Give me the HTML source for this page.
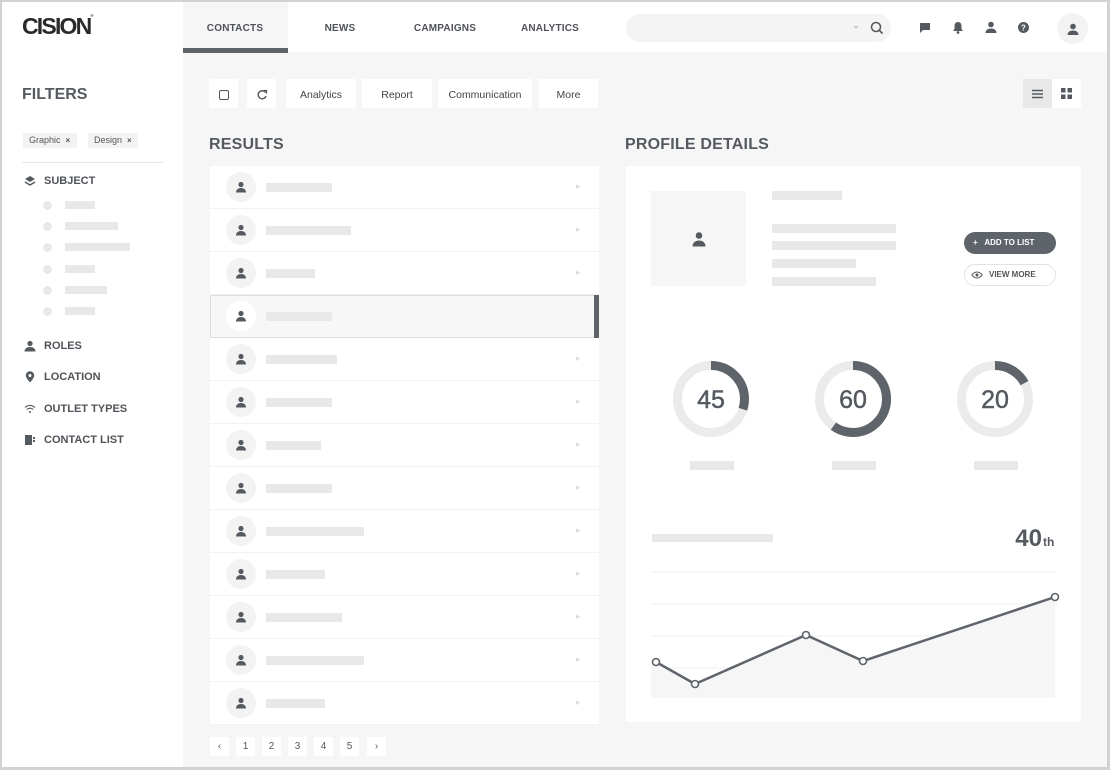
<!DOCTYPE html>
<html><head><meta charset="utf-8"><style>
*{margin:0;padding:0;box-sizing:border-box}
body{width:1110px;height:770px;position:relative;overflow:hidden;background:#fff;font-family:"Liberation Sans",Arial,sans-serif;color:#555a60}
.a{position:absolute}
.frame{left:0;top:0;width:1110px;height:770px;border:2px solid #d2d2d2;border-right-width:3px;border-bottom-width:3px;z-index:50;pointer-events:none}
.main{left:183px;top:52px;width:927px;height:718px;background:#f6f6f6}
.nav{top:23px;font-size:10px;font-weight:bold;color:#4f5359;letter-spacing:.2px;transform:translateX(-50%)}
.btn{top:79px;height:29px;background:#fff;font-size:10.5px;color:#555;display:flex;align-items:center;justify-content:center;font-weight:bold;padding-top:2px}
.h2{font-size:16px;font-weight:bold;color:#555a60;top:136px;letter-spacing:.2px}
.bar{background:#e8e8e8;height:9px}
.row{left:210px;width:389px;height:43px;background:#fff;border-bottom:1px solid #f2f2f2}
.av{width:30px;height:30px;border-radius:50%;background:#f3f3f3;display:flex;align-items:center;justify-content:center}
.chev{font-size:9px;color:#ddd}
.side{font-size:11px;font-weight:bold;color:#4f5359;left:44px}
.pg{top:737px;width:19px;height:19px;background:#fff;font-size:10px;color:#555;display:flex;align-items:center;justify-content:center}
</style></head><body>
<div class="a frame"></div>
<div class="a main"></div>
<!-- header -->
<div class="a" style="left:22px;top:13px;font-size:23px;font-weight:bold;color:#2a2a2a;letter-spacing:-1.8px">CISION<span style="font-size:4px;vertical-align:top;letter-spacing:0">®</span></div>
<div class="a" style="left:183px;top:0;width:105px;height:52px;background:#f6f6f6"></div>
<div class="a" style="left:183px;top:48px;width:105px;height:5px;background:#5f646b"></div>
<div class="a nav" style="left:235px">CONTACTS</div>
<div class="a nav" style="left:340px">NEWS</div>
<div class="a nav" style="left:445px">CAMPAIGNS</div>
<div class="a nav" style="left:550px">ANALYTICS</div>
<div class="a" style="left:626px;top:14px;width:265px;height:28px;border-radius:14px;background:#f4f4f4"></div>
<svg class="a" style="left:850px;top:20px" width="40" height="16"><path d="M3 6l3 3 3-3z" fill="#ccc"/><circle cx="26" cy="7" r="4.5" fill="none" stroke="#555" stroke-width="1.5"/><path d="M29.5 10.5l3 3" stroke="#555" stroke-width="1.6"/></svg>
<svg class="a" style="left:918px;top:21px" width="14" height="14"><path d="M2 2h10v7H5l-3 3z" fill="#555a60"/></svg>
<svg class="a" style="left:951px;top:20px" width="14" height="15"><path d="M7 2c-2.5 0-3.5 2-3.5 4v3L2 11h10l-1.5-2V6C10.5 4 9.5 2 7 2z" fill="#555a60"/><circle cx="7" cy="12.5" r="1.4" fill="#555a60"/></svg>
<svg class="a" style="left:984px;top:20px" width="14" height="14"><circle cx="7" cy="4.5" r="2.8" fill="#555a60"/><path d="M1.5 13c0-3 2.5-4.5 5.5-4.5s5.5 1.5 5.5 4.5z" fill="#555a60"/></svg>
<svg class="a" style="left:1017px;top:21px" width="13" height="13"><circle cx="6.5" cy="6.5" r="5.5" fill="#555a60"/><text x="6.5" y="9.5" font-size="8" font-weight="bold" fill="#fff" text-anchor="middle" font-family="Liberation Sans">?</text></svg>
<div class="a av" style="left:1057px;top:13px;width:31px;height:31px"><svg width="14" height="14"><circle cx="7" cy="4.5" r="2.8" fill="#555a60"/><path d="M1.5 13c0-3 2.5-4.5 5.5-4.5s5.5 1.5 5.5 4.5z" fill="#555a60"/></svg></div>

<!-- sidebar -->
<div class="a" style="left:22px;top:86px;font-size:16px;font-weight:bold;color:#555a60">FILTERS</div>
<div class="a" style="left:23px;top:133px;width:54px;height:15px;background:#f3f3f3;font-size:9px;color:#555;line-height:15px;padding-left:6px">Graphic&nbsp; <b style="font-size:8px">×</b></div>
<div class="a" style="left:88px;top:133px;width:50px;height:15px;background:#f3f3f3;font-size:9px;color:#555;line-height:15px;padding-left:6px">Design&nbsp; <b style="font-size:8px">×</b></div>
<div class="a" style="left:22px;top:162px;width:141px;height:1px;background:#e6e6e6"></div>
<svg class="a" style="left:24px;top:175px" width="12" height="12"><path d="M6 1l5 3-5 3-5-3z" fill="#555a60"/><path d="M1 7l5 3 5-3" fill="none" stroke="#555a60" stroke-width="1.5"/></svg>
<div class="a side" style="top:175px">SUBJECT</div>
<div class="a" style="left:43px;top:201px;width:9px;height:9px;border-radius:50%;background:#e8e8e8"></div><div class="a bar" style="left:65px;top:201px;width:30px;height:8px"></div>
<div class="a" style="left:43px;top:222px;width:9px;height:9px;border-radius:50%;background:#e8e8e8"></div><div class="a bar" style="left:65px;top:222px;width:53px;height:8px"></div>
<div class="a" style="left:43px;top:243px;width:9px;height:9px;border-radius:50%;background:#e8e8e8"></div><div class="a bar" style="left:65px;top:243px;width:65px;height:8px"></div>
<div class="a" style="left:43px;top:265px;width:9px;height:9px;border-radius:50%;background:#e8e8e8"></div><div class="a bar" style="left:65px;top:265px;width:30px;height:8px"></div>
<div class="a" style="left:43px;top:286px;width:9px;height:9px;border-radius:50%;background:#e8e8e8"></div><div class="a bar" style="left:65px;top:286px;width:42px;height:8px"></div>
<div class="a" style="left:43px;top:307px;width:9px;height:9px;border-radius:50%;background:#e8e8e8"></div><div class="a bar" style="left:65px;top:307px;width:30px;height:8px"></div>
<svg class="a" style="left:24px;top:340px" width="12" height="12"><circle cx="6" cy="3.5" r="2.6" fill="#555a60"/><path d="M0.5 11.5c0-3 2.5-4.5 5.5-4.5s5.5 1.5 5.5 4.5z" fill="#555a60"/></svg>
<div class="a side" style="top:340px">ROLES</div>
<svg class="a" style="left:24px;top:371px" width="12" height="12"><path d="M6 11.5C3 8 1.8 6.2 1.8 4.5a4.2 4.2 0 0 1 8.4 0c0 1.7-1.2 3.5-4.2 7z" fill="#555a60"/><circle cx="6" cy="4.5" r="1.5" fill="#fff"/></svg>
<div class="a side" style="top:371px">LOCATION</div>
<svg class="a" style="left:24px;top:403px" width="12" height="12"><path d="M1 4.5a7 7 0 0 1 10 0M2.8 6.5a4.5 4.5 0 0 1 6.4 0" fill="none" stroke="#555a60" stroke-width="1.1"/><circle cx="6" cy="9" r="1" fill="#555a60"/></svg>
<div class="a side" style="top:403px">OUTLET TYPES</div>
<svg class="a" style="left:24px;top:434px" width="12" height="12"><rect x="1" y="1" width="7" height="10" fill="#555a60"/><rect x="9" y="3" width="2" height="2" fill="#555a60"/><rect x="9" y="6" width="2" height="2" fill="#555a60"/></svg>
<div class="a side" style="top:434px">CONTACT LIST</div>

<!-- toolbar -->
<div class="a btn" style="left:209px;width:29px"><div style="width:10px;height:10px;border:1.5px solid #555;border-radius:2px"></div></div>
<div class="a btn" style="left:247px;width:29px"><svg width="12" height="12"><path d="M9.5 3.5A4 4 0 1 0 10 7" fill="none" stroke="#555" stroke-width="1.4"/><path d="M7.5 1.5l3 0 0 3" fill="none" stroke="#555" stroke-width="1.3"/></svg></div>
<div class="a btn" style="left:286px;width:70px;font-weight:normal;color:#444">Analytics</div>
<div class="a btn" style="left:362px;width:70px;font-weight:normal;color:#444">Report</div>
<div class="a btn" style="left:438px;width:94px;font-weight:normal;color:#444">Communication</div>
<div class="a btn" style="left:539px;width:59px;font-weight:normal;color:#444">More</div>
<div class="a btn" style="left:1023px;width:29px;background:#e8e8e8;padding:0"><svg width="11" height="10"><path d="M0 1.5h11M0 5h11M0 8.5h11" stroke="#555a60" stroke-width="1.6"/></svg></div>
<div class="a btn" style="left:1052px;width:29px;padding:0"><svg width="11" height="11"><rect x="0" y="0" width="4.5" height="4.5" fill="#555a60"/><rect x="6.5" y="0" width="4.5" height="4.5" fill="#555a60"/><rect x="0" y="6.5" width="4.5" height="4.5" fill="#555a60"/><rect x="6.5" y="6.5" width="4.5" height="4.5" fill="#555a60"/></svg></div>

<div class="a h2" style="left:209px">RESULTS</div>
<div class="a h2" style="left:625px">PROFILE DETAILS</div>

<!-- list -->
<div class="a" style="left:210px;top:166px;width:389px;height:556px;background:#fff"></div>
<div id="rows"></div>
<script>
var w=[66,85,49,66,71,66,55,66,98,59,76,98,59],h='';
var ic='<svg width="12" height="12"><circle cx="6" cy="3.5" r="2.6" fill="#555a60"/><path d="M1 11.5c0-3 2.3-4.5 5-4.5s5 1.5 5 4.5z" fill="#555a60"/></svg>';
for(var i=0;i<13;i++){var t=166+i*43,s=i==3;
h+='<div class="a row" style="top:'+t+'px;'+(s?'background:#f7f7f7;border:1px solid #dcdcdc;':'')+'"></div>';
if(s)h+='<div class="a" style="left:594px;top:'+t+'px;width:5px;height:43px;background:#5f646b"></div>';
h+='<div class="a av" style="left:226px;top:'+(t+6)+'px;'+(s?'background:#fff':'')+'">'+ic+'</div>';
h+='<div class="a bar" style="left:266px;top:'+(t+17)+'px;width:'+w[i]+'px"></div>';
if(!s)h+='<div class="a chev" style="left:576px;top:'+(t+15)+'px">&#9656;</div>';}
var p=['&lsaquo;','1','2','3','4','5','&rsaquo;'],x=[210,236,262,288,314,340,367];
for(i=0;i<7;i++)h+='<div class="a pg" style="left:'+x[i]+'px">'+p[i]+'</div>';
document.getElementById('rows').innerHTML=h;
</script>

<!-- profile -->
<div class="a" style="left:626px;top:166px;width:455px;height:556px;background:#fff"></div>
<div class="a" style="left:651px;top:191px;width:95px;height:95px;background:#f6f6f6;display:flex;align-items:center;justify-content:center"><svg width="14" height="16"><circle cx="7" cy="4.5" r="3.3" fill="#555a60"/><path d="M0.5 15.5c0-4 3-6 6.5-6s6.5 2 6.5 6z" fill="#555a60"/></svg></div>
<div class="a bar" style="left:772px;top:191px;width:70px"></div>
<div class="a bar" style="left:772px;top:224px;width:124px"></div>
<div class="a bar" style="left:772px;top:241px;width:124px"></div>
<div class="a bar" style="left:772px;top:259px;width:84px"></div>
<div class="a bar" style="left:772px;top:277px;width:104px"></div>
<div class="a" style="left:964px;top:232px;width:92px;height:22px;border-radius:11px;background:#5f646b;color:#fff;font-size:8px;font-weight:bold;line-height:22px;padding-left:9px">+&nbsp;&nbsp;&nbsp;ADD TO LIST</div>
<div class="a" style="left:964px;top:264px;width:92px;height:22px;border-radius:11px;border:1px solid #e2e2e2;color:#555;font-size:8px;font-weight:bold;line-height:20px;padding-left:24px">VIEW MORE</div>
<svg class="a" style="left:971px;top:270px" width="12" height="10"><path d="M1 5c2.5-4 7.5-4 10 0c-2.5 4-7.5 4-10 0z" fill="none" stroke="#555" stroke-width="1.1"/><circle cx="6" cy="5" r="1.5" fill="#555"/></svg>

<svg class="a" style="left:626px;top:340px" width="455" height="380">
<g font-family="Liberation Sans" font-size="25" fill="#555a60" text-anchor="middle" stroke="#555a60" stroke-width="0.5">
<text x="85" y="68">45</text>
<text x="227" y="68">60</text>
<text x="369" y="68">20</text>
</g>
<circle cx="85" cy="59" r="33.5" fill="none" stroke="#ebebeb" stroke-width="9"/>
<circle cx="85" cy="59" r="33.5" fill="none" stroke="#5f646b" stroke-width="9" stroke-dasharray="63 300" transform="rotate(-90 85 59)"/>
<circle cx="227" cy="59" r="33.5" fill="none" stroke="#ebebeb" stroke-width="9"/>
<circle cx="227" cy="59" r="33.5" fill="none" stroke="#5f646b" stroke-width="9" stroke-dasharray="126 300" transform="rotate(-90 227 59)"/>
<circle cx="369" cy="59" r="33.5" fill="none" stroke="#ebebeb" stroke-width="9"/>
<circle cx="369" cy="59" r="33.5" fill="none" stroke="#5f646b" stroke-width="9" stroke-dasharray="36 300" transform="rotate(-90 369 59)"/>
<rect x="64" y="121" width="44" height="9" fill="#e8e8e8"/>
<rect x="206" y="121" width="44" height="9" fill="#e8e8e8"/>
<rect x="348" y="121" width="44" height="9" fill="#e8e8e8"/>
<rect x="26" y="194" width="121" height="8" fill="#e8e8e8"/>
<text x="416" y="206" font-family="Liberation Sans" font-size="24" font-weight="bold" fill="#555a60" text-anchor="end">40</text>
<text x="417" y="206" font-family="Liberation Sans" font-size="12" font-weight="bold" fill="#555a60">th</text>
<g stroke="#f0f0f0" stroke-width="1"><path d="M25 232H431M25 264H431M25 296H431M25 328H431"/></g>
<path d="M30 322L69 344L180 295L237 321L429 257V358H25V322z" fill="#f6f6f6"/>
<path d="M30 322L69 344L180 295L237 321L429 257" fill="none" stroke="#5f646b" stroke-width="2.5"/>
<g fill="#fff" stroke="#5f646b" stroke-width="1.6"><circle cx="30" cy="322" r="3.5"/><circle cx="69" cy="344" r="3.5"/><circle cx="180" cy="295" r="3.5"/><circle cx="237" cy="321" r="3.5"/><circle cx="429" cy="257" r="3.5"/></g>
</svg>
</body></html>
